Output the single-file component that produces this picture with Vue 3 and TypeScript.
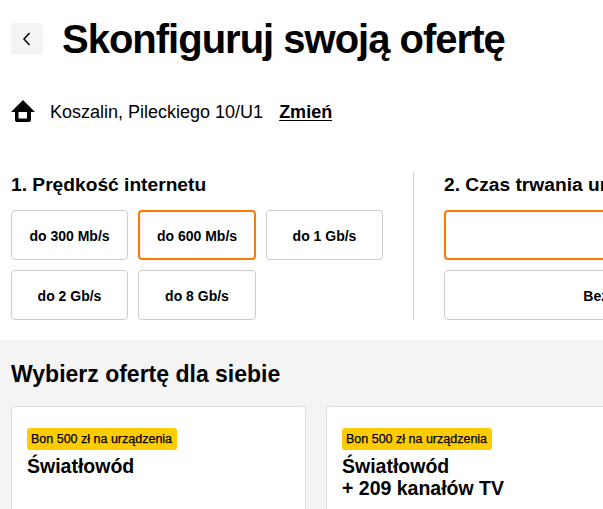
<script setup lang="ts">
const speeds: string[] = ['do 300 Mb/s', 'do 600 Mb/s', 'do 1 Gb/s', 'do 2 Gb/s', 'do 8 Gb/s']
const offers: string[][] = [['Światłowód'], ['Światłowód', '+ 209 kanałów TV']]
</script>

<template>
  <div class="page">
    <header class="head">
      <button class="back" aria-label="Wstecz">
        <svg width="8" height="14" viewBox="0 0 8 14"><path d="M6.500 1 1 7 6.500 13" fill="none" stroke="#000" stroke-width="1.500" /></svg>
      </button>
      <h1>Skonfiguruj swoją ofertę</h1>
    </header>
    <div class="address">
      <svg class="home" width="24" height="24" viewBox="0 0 24 24">
        <path fill-rule="evenodd" d="M12 0 24 12H20V20C20 21.200 19.200 22 18 22H6C4.800 22 4 21.200 4 20V12H0ZM7.500 12V18.500H16V12Z" fill="#000" />
      </svg>
      <span class="addr-text">Koszalin, Pileckiego 10/U1</span>
      <a class="change">Zmień</a>
    </div>
    <section class="config">
      <div class="col first">
        <h2>1. Prędkość internetu</h2>
        <div class="speed-grid">
          <button v-for="(s, i) in speeds" :key="s" class="opt" :class="{ on: i === 1 }">{{ s }}</button>
        </div>
      </div>
      <div class="col second">
        <h2 class="nowrap">2. Czas trwania umowy</h2>
        <div class="term-list">
          <button class="opt on term"></button>
          <button class="opt term">Bez zobowiązań</button>
        </div>
      </div>
    </section>
    <section class="offers">
      <h2 class="offers-title">Wybierz ofertę dla siebie</h2>
      <div class="cards">
        <article v-for="(o, i) in offers" :key="i" class="card">
          <span class="badge">Bon 500 zł na urządzenia</span>
          <h3><span v-for="l in o" :key="l" class="line">{{ l }}</span></h3>
        </article>
      </div>
    </section>
  </div>
</template>

<style>
html, body { margin: 0; overflow: hidden; background: #fff; }
</style>

<style scoped>
.page {
  width: 603px;
  height: 509px;
  overflow: hidden;
  font-family: "Liberation Sans", Arial, sans-serif;
  color: #000;
  background: #fff;
}
h1, h2, h3 { margin: 0; }
.head {
  display: flex;
  align-items: center;
  gap: 19px;
  padding: 17px 11px 0;
  height: 44px;
}
.back {
  width: 32px;
  height: 32px;
  flex: none;
  border: 0;
  padding: 0;
  border-radius: 4px;
  background: #f4f4f4;
  display: flex;
  align-items: center;
  justify-content: center;
}
h1 {
  font-size: 40px;
  line-height: 44px;
  font-weight: 700;
  white-space: nowrap;
  letter-spacing: -1px;
}
.address {
  display: flex;
  align-items: center;
  margin-top: 39px;
  padding-left: 11px;
  height: 24px;
  font-size: 18px;
}
.home { margin-right: 15px; flex: none; }
.change {
  margin-left: 16px;
  font-weight: 700;
  text-decoration: underline;
  text-underline-offset: 2px;
}
.config {
  display: flex;
  margin-top: 49px;
  padding-left: 11px;
  height: 147px;
}
.col h2 {
  font-size: 19.200px;
  line-height: 24px;
  margin-bottom: 13px;
}
.first {
  flex: none;
  width: 372px;
  padding-right: 30px;
  border-right: 1px solid #ccc;
  margin-right: 30px;
}
.second { flex: none; width: 386px; }
.nowrap { white-space: nowrap; }
.speed-grid {
  display: grid;
  grid-template-columns: 117px 118px 117px;
  gap: 10px;
}
.term-list { display: flex; flex-direction: column; gap: 10px; }
.opt {
  height: 50px;
  box-sizing: border-box;
  background: #fff;
  border: 1px solid #ccc;
  border-radius: 4px;
  font: 700 14px "Liberation Sans", Arial, sans-serif;
  color: #000;
  padding: 2px 0 0;
}
.opt.on { border: 2px solid #ff7900; }
.term { width: 100%; }
.offers {
  margin-top: 20px;
  background: #f4f4f4;
  padding: 20px 11px 0;
  height: 200px;
}
.offers-title {
  font-size: 23px;
  line-height: 28px;
}
.cards {
  display: flex;
  gap: 20px;
  margin-top: 18px;
}
.card {
  flex: none;
  width: 295px;
  height: 200px;
  box-sizing: border-box;
  background: #fff;
  border: 1px solid #ddd;
  border-radius: 4px;
  padding: 21px 15px;
}
.badge {
  display: block;
  width: 150px;
  box-sizing: border-box;
  background: #ffcc00;
  border-radius: 3px;
  font-size: 12.500px;
  line-height: 22px;
  padding: 0 4px;
  white-space: nowrap;
  -webkit-text-stroke: 0.25px #000;
}
h3 {
  font-size: 19.500px;
  line-height: 22px;
  margin-top: 5px;
}
.line { display: block; }
</style>
